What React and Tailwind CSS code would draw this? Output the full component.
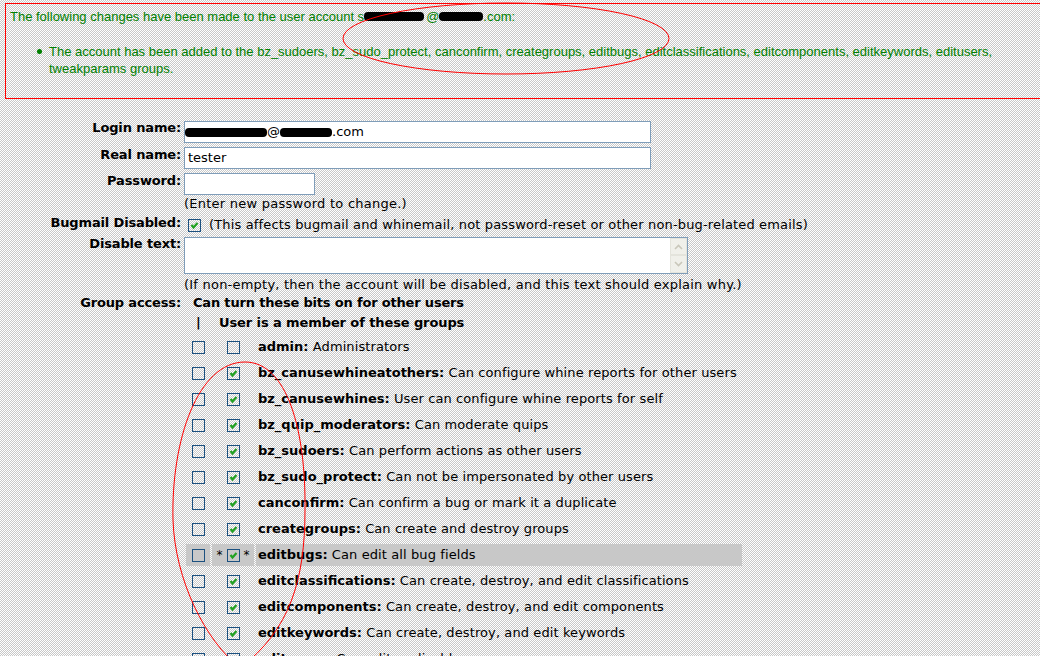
import React from "react";

const groups = [
  ["admin", "Administrators", false],
  ["bz_canusewhineatothers", "Can configure whine reports for other users", true],
  ["bz_canusewhines", "User can configure whine reports for self", true],
  ["bz_quip_moderators", "Can moderate quips", true],
  ["bz_sudoers", "Can perform actions as other users", true],
  ["bz_sudo_protect", "Can not be impersonated by other users", true],
  ["canconfirm", "Can confirm a bug or mark it a duplicate", true],
  ["creategroups", "Can create and destroy groups", true],
  ["editbugs", "Can edit all bug fields", true, true],
  ["editclassifications", "Can create, destroy, and edit classifications", true],
  ["editcomponents", "Can create, destroy, and edit components", true],
  ["editkeywords", "Can create, destroy, and edit keywords", true],
  ["editusers", "Can edit or disable users", true],
];

function Box({ checked }) {
  return (
    <span className="inline-block w-[13px] h-[13px] border border-[#1c5180] relative shrink-0">
      {checked && (
        <svg className="absolute left-0 top-0" width="11" height="11" viewBox="0 0 11 11">
          <path d="M2.5 5 L4.5 7.5 L8.5 3" fill="none" stroke="#21a121" strokeWidth="2.2" />
        </svg>
      )}
    </span>
  );
}

function Blob({ w }) {
  return <span className={`inline-block h-[9px] bg-black rounded-[4px] align-middle ${w}`} />;
}

export default function App() {
  return (
    <div className="w-[1040px] h-[656px] overflow-hidden relative bg-[repeating-conic-gradient(#c8c8c8_0_25%,#ffffff_0_50%)] bg-[length:2px_2px] font-['DejaVu_Sans',sans-serif] text-[13px] text-black">
      <div className="pt-[3px] pl-[5px]">
        <div className="h-[96px] border-l border-t border-b border-[#ff0000] pl-[4px] pt-[4px] font-['Liberation_Sans',sans-serif] text-[13px] leading-[17px] text-[#008000]">
          <p className="flex items-center">
            The following changes have been made to the user account&nbsp;s
            <Blob w="w-[60px]" />
            <span className="ml-[2px]">@</span>
            <Blob w="w-[44px]" />
            .com:
          </p>
          <div className="flex mt-[18px] pl-[27px] pr-[20px]">
            <span className="w-[5px] h-[5px] rounded-full bg-[#008000] mt-[6px] mr-[7px] shrink-0" />
            <span>
              The account has been added to the bz_sudoers, bz_sudo_protect, canconfirm, creategroups, editbugs, editclassifications, editcomponents, editkeywords, editusers, tweakparams groups.
            </span>
          </div>
        </div>
      </div>

      <div className="pt-[21px] leading-[16px]">
        {/* Login name */}
        <div className="flex h-[26px]">
          <div className="w-[181px] text-right font-bold tracking-[-0.15px]">Login name:</div>
          <div className="ml-[3px] mt-[1px] w-[467px] h-[22px] bg-white border border-[#7f9db9] flex items-center pl-[0px]">
            <Blob w="w-[82px]" />
            <span>@</span>
            <Blob w="w-[52px]" />
            <span>.com</span>
          </div>
        </div>
        {/* Real name */}
        <div className="flex h-[26px]">
          <div className="w-[181px] text-right font-bold pt-[1px] tracking-[-0.15px]">Real name:</div>
          <div className="ml-[3px] mt-[1px] w-[467px] h-[22px] bg-white border border-[#7f9db9] flex items-center pl-[3px]">tester</div>
        </div>
        {/* Password */}
        <div className="flex h-[24px]">
          <div className="w-[181px] text-right font-bold pt-[1px] tracking-[-0.15px]">Password:</div>
          <div className="ml-[3px] mt-[1px] w-[131px] h-[22px] bg-white border border-[#7f9db9]" />
        </div>
        <div className="flex h-[18px]">
          <div className="w-[181px]" />
          <div className="ml-[3px] tracking-[0.25px]">(Enter new password to change.)</div>
        </div>
        {/* Bugmail disabled */}
        <div className="flex h-[22px]">
          <div className="w-[181px] text-right font-bold pt-[1px] tracking-[-0.15px]">Bugmail Disabled:</div>
          <div className="ml-[7px] mt-[5px]"><Box checked /></div>
          <div className="ml-[8px] pt-[3px] tracking-[0.15px]">(This affects bugmail and whinemail, not password-reset or other non-bug-related emails)</div>
        </div>
        {/* Disable text */}
        <div className="flex h-[38px]">
          <div className="w-[181px] text-right font-bold tracking-[-0.15px]">Disable text:</div>
          <div className="ml-[3px] mt-[1px] w-[504px] h-[37px] bg-white border border-[#7f9db9] flex justify-end">
            <div className="w-[17px] flex flex-col bg-[#f4f4f0]">
              <div className="h-[17px] border border-[#e4e4dc] bg-[#f0f0ea] flex items-center justify-center">
                <svg width="9" height="6" viewBox="0 0 9 6"><path d="M1 5 L4.5 1.5 L8 5" fill="none" stroke="#c9c7ba" strokeWidth="1.6" /></svg>
              </div>
              <div className="h-[18px] border border-[#e4e4dc] bg-[#f0f0ea] flex items-center justify-center">
                <svg width="9" height="6" viewBox="0 0 9 6"><path d="M1 1 L4.5 4.5 L8 1" fill="none" stroke="#c9c7ba" strokeWidth="1.6" /></svg>
              </div>
            </div>
          </div>
        </div>
        <div className="flex h-[20px]">
          <div className="w-[181px]" />
          <div className="ml-[3px] pt-[3px] tracking-[0.22px]">(If non-empty, then the account will be disabled, and this text should explain why.)</div>
        </div>
        {/* Group access */}
        <div className="flex h-[20px]">
          <div className="w-[181px] text-right font-bold pt-[1px] tracking-[-0.15px]">Group access:</div>
          <div className="ml-[12px] pt-[1px] font-bold tracking-[-0.18px]">Can turn these bits on for other users</div>
        </div>
        <div className="flex h-[22px]">
          <div className="w-[196px]" />
          <div className="pt-[1px] font-bold w-[23px]">|</div>
          <div className="pt-[1px] font-bold tracking-[-0.1px]">User is a member of these groups</div>
        </div>
        {/* Group rows */}
        <div className="flex flex-col gap-[4px]">
          {groups.map(([name, desc, checked, hl]) => (
            <div key={name} className="flex gap-[2px] h-[22px] ml-[186px]">
              <div className={`w-[24px] flex items-center justify-center ${hl ? "bg-[#c8c8c8]" : ""}`}>
                <Box />
              </div>
              <div className={`w-[42px] flex items-center justify-center gap-[4px] ${hl ? "bg-[#c8c8c8]" : ""}`}>
                {hl && <span className="text-[12px]">*</span>}
                <Box checked={checked} />
                {hl && <span className="text-[12px]">*</span>}
              </div>
              <div className={`w-[486px] flex items-center pl-[2px] whitespace-nowrap ${hl ? "bg-[#c8c8c8]" : ""}`}>
                <span className="font-bold">{name}:</span>
                <span className="tracking-[0.1px]">&nbsp;{desc}</span>
              </div>
            </div>
          ))}
        </div>
      </div>

      <svg className="absolute left-0 top-0 pointer-events-none" width="1040" height="656" viewBox="0 0 1040 656">
        <ellipse cx="506" cy="38.5" rx="163" ry="35.5" fill="none" stroke="#ff0000" strokeWidth="1" />
        <path
          d="M245 362 C287 362 306 430 305 510 C305 580 290 630 240 668 C205 640 175 580 173 520 C171 440 198 362 245 362 Z"
          fill="none"
          stroke="#ff0000"
          strokeWidth="1"
        />
      </svg>
    </div>
  );
}
